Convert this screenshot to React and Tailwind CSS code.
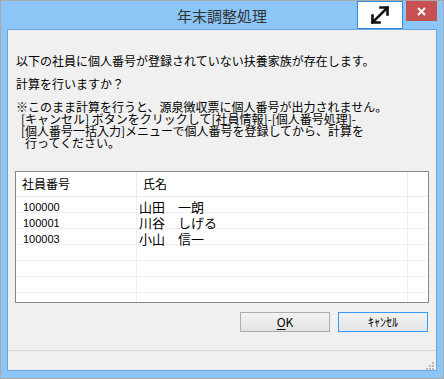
import React from 'react';

/* ── Title bar buttons ───────────────────────────────── */
const ExpandButton = () => (
  <button className="w-[46px] h-[28px] bg-white border border-[#2f8ae6] flex items-center justify-center">
    <svg width="22" height="22" viewBox="0 0 22 22" fill="none" stroke="#111" strokeWidth="2.6" strokeLinecap="square">
      <path d="M3.5 18.5 18.5 3.5" />
      <path d="M11.5 3.5h7v7" />
      <path d="M3.5 11.5v7h7" />
    </svg>
  </button>
);

const CloseButton = () => (
  <button className="w-[31px] h-[20px] bg-[#c75050] flex items-center justify-center">
    <svg width="9" height="9" viewBox="0 0 9 9" stroke="#fff" strokeWidth="2">
      <path d="M1 1l7 7M8 1 1 8" />
    </svg>
  </button>
);

/* ── Size grip ───────────────────────────────────────── */
const SizeGrip = () => (
  <svg width="8" height="8" viewBox="0 0 8 8" fill="#b8b8b8">
    <rect x="6" y="0" width="2" height="2" />
    <rect x="3" y="3" width="2" height="2" />
    <rect x="6" y="3" width="2" height="2" />
    <rect x="0" y="6" width="2" height="2" />
    <rect x="3" y="6" width="2" height="2" />
    <rect x="6" y="6" width="2" height="2" />
  </svg>
);

const rows = [
  { no: '100000', name: '山田　一朗' },
  { no: '100001', name: '川谷　しげる' },
  { no: '100003', name: '小山　信一' },
  { no: '', name: '' },
  { no: '', name: '' },
  { no: '', name: '' },
  { no: '', name: '' },
];

/* ── Main export ─────────────────────────────────────── */
export default function App() {
  return (
    <div className="w-[444px] h-[379px] border border-[#a9a9a9] bg-[#8bc6f7] flex flex-col font-['Noto_Sans_CJK_JP',sans-serif] text-black">
      {/* title bar */}
      <div className="h-[28px] grid grid-cols-[1fr_auto_1fr] items-start">
        <div />
        <div className="h-[28px] flex items-center text-[15px] leading-none text-[#333333] pt-[1px]">年末調整処理</div>
        <div className="flex justify-end items-start gap-[3px] pr-[6px]">
          <ExpandButton />
          <CloseButton />
        </div>
      </div>

      {/* client area */}
      <div className="mx-[6px] mb-[7px] flex-1 border border-[#6fa6da] bg-[#f0f0f0] flex flex-col">
        <div className="pl-[8px] pt-[25px] text-[12px] leading-[12px]">
          <p>以下の社員に個人番号が登録されていない扶養家族が存在します。</p>
          <p className="mt-[11px]">計算を行いますか？</p>
          <div className="mt-[11px]">
            <p>※このまま計算を行うと、源泉徴収票に個人番号が出力されません。</p>
            <p className="pl-[5px]">[キャンセル] ボタンをクリックして[社員情報]-[個人番号処理]-</p>
            <p className="pl-[5px]">[個人番号一括入力]メニューで個人番号を登録してから、計算を</p>
            <p className="pl-[9px]">行ってください。</p>
          </div>
        </div>

        {/* list */}
        <div className="mx-[7px] mt-[22px] h-[132px] border border-[#828790] bg-white overflow-hidden">
          <div className="grid grid-cols-[121px_271px_20px] h-[25px] border-b border-[#e3ecf8] text-[12px]">
            <div className="border-r border-[#e3ecf8] flex items-center pl-[6px]">社員番号</div>
            <div className="border-r border-[#e3ecf8] flex items-center pl-[6px]">氏名</div>
            <div />
          </div>
          {rows.map((r, i) => (
            <div key={i} className="grid grid-cols-[121px_271px_20px] h-[16px] border-b border-[#efefef]">
              <div className="border-r border-[#efefef] flex items-center pl-[7px] text-[11px] font-['Liberation_Sans',sans-serif]">{r.no}</div>
              <div className="border-r border-[#efefef] flex items-center pl-[2px] text-[13px]">{r.name}</div>
              <div />
            </div>
          ))}
        </div>

        {/* buttons */}
        <div className="mt-[9px] flex justify-end gap-[8px] pr-[8px]">
          <button className="w-[90px] h-[20px] border border-[#adadad] bg-gradient-to-b from-[#f2f2f2] to-[#e4e4e4] text-[12px] leading-none">
            <span className="underline underline-offset-2">O</span>K
          </button>
          <button className="w-[90px] h-[20px] border border-[#3399ff] bg-gradient-to-b from-[#f2f2f2] to-[#e4e4e4] text-[12px] leading-none">
            ｷｬﾝｾﾙ
          </button>
        </div>

        <div className="flex-1" />

        {/* status bar */}
        <div className="h-[20px] border-t border-[#d7d7d7] flex justify-end items-end pr-[2px]">
          <SizeGrip />
        </div>
      </div>
    </div>
  );
}
